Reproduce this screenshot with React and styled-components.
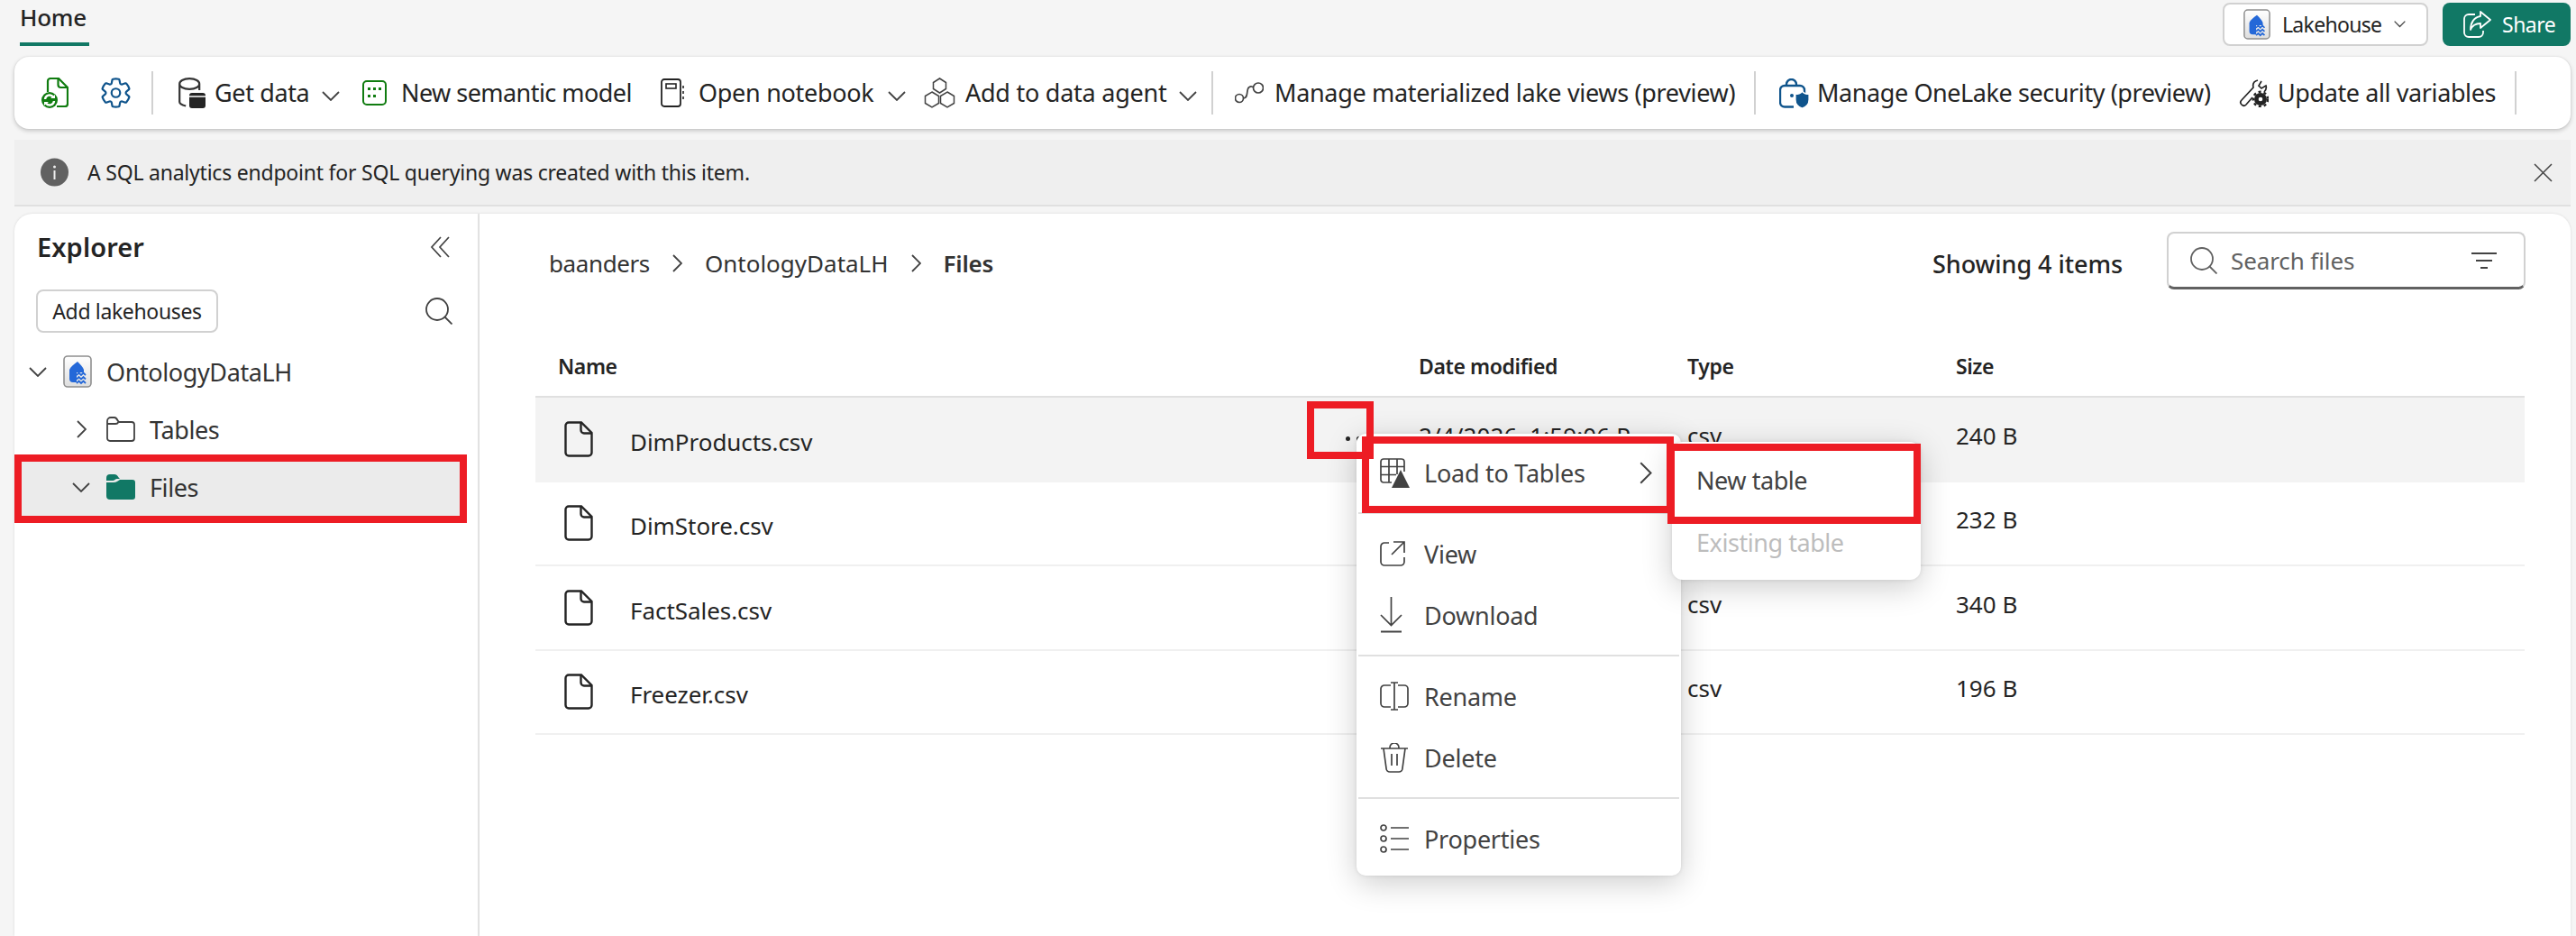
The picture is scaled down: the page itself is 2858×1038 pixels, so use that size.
import React from "react";
import styled, { createGlobalStyle } from "styled-components";

const Global = createGlobalStyle`
  html, body { margin: 0; padding: 0; background: #f5f5f5; }
  * { box-sizing: border-box; }
  body { font-family: "Noto Sans", "Open Sans", sans-serif; color: #242424; }
`;

const Page = styled.div`
  position: relative; width: 2858px; height: 1038px; overflow: hidden;
  background: #f5f5f5; display: flex; flex-direction: column;
`;
const TopBar = styled.header`
  height: 63px; flex: none; display: flex; padding: 3px 6px 0 22px; gap: 16px;
`;
const Tab = styled.div`
  width: 77px; height: 48px; border-bottom: 4px solid #117865; font-size: 26px; font-weight: 500;
  line-height: 32px; letter-spacing: -0.25px; white-space: nowrap; margin-right: auto;
`;
const LakehouseButton = styled.button`
  width: 228px; height: 48px; background: #fff; border: 2px solid #d1d1d1; border-radius: 8px;
  display: flex; align-items: center; padding: 0 0 0 21px; font: inherit; font-size: 23px; color: #242424;
  letter-spacing: -0.7px;
  svg:first-child { margin-right: 13px; }
  svg:last-child { margin-left: 14px; }
`;
const ShareButton = styled.button`
  width: 142px; height: 48px; background: #117865; border: 0; border-radius: 8px; color: #fff;
  display: flex; align-items: center; padding: 0 0 0 23px; gap: 12px; font: inherit; font-size: 23px;
  letter-spacing: -0.5px;
`;
const Toolbar = styled.nav`
  flex: none; margin: 0 6px 0 16px; height: 80px; background: #fff; border-radius: 16px;
  box-shadow: 0 2px 5px rgba(0,0,0,.2), 0 0 2px rgba(0,0,0,.1);
  display: flex; align-items: center; padding-left: 30px; font-size: 27px;
`;
const IconSlot = styled.span`
  display: flex; align-items: center; width: ${p => p.$w}px; flex: none;
`;
const ToolDivider = styled.span`
  width: 2px; height: 48px; background: #d1d1d1; flex: none; margin-right: ${p => p.$mr || 0}px;
`;
const ToolItem = styled.span`
  display: flex; align-items: center; flex: none; width: ${p => p.$w}px; gap: ${p => p.$gap}px;
`;
const ToolText = styled.span`
  white-space: nowrap; letter-spacing: ${p => p.$ls}px; line-height: 36px;
`;
const ChevronWrap = styled.span`
  display: flex; margin-left: ${p => p.$ml}px; padding-top: 6px;
`;
const InfoBar = styled.div`
  flex: none; margin: 12px 6px 0 16px; height: 74px; background: #efefef; border-bottom: 2px solid #e0e0e0;
  display: flex; align-items: center; padding: 0 20px 0 29px; font-size: 23px;
`;
const InfoText = styled.span`
  margin-left: 21px; letter-spacing: -0.22px; margin-right: auto;
`;
const Main = styled.main`
  flex: 1; margin: 8px 6px 0 16px; display: flex; min-height: 0;
`;
const Sidebar = styled.aside`
  width: 516px; flex: none; background: #fff; border-right: 2px solid #e8e8e8; border-radius: 20px 0 0 0;
  box-shadow: 0 0 3px rgba(0,0,0,.12);
`;
const SideHead = styled.div`
  display: flex; justify-content: space-between; align-items: center; padding: 19px 31px 0 25px;
  height: 55px;
`;
const SideTitle = styled.h2`
  margin: 0; font-size: 29px; font-weight: 600; line-height: 36px; letter-spacing: 0.1px;
`;
const SideActions = styled.div`
  display: flex; justify-content: space-between; align-items: center; padding: 29px 28px 0 24px;
`;
const AddButton = styled.button`
  width: 202px; height: 48px; background: #fff; border: 2px solid #d1d1d1; border-radius: 8px;
  font: inherit; font-size: 23px; color: #242424; padding: 0; letter-spacing: -0.35px;
`;
const Tree = styled.div`
  margin-top: 11px; padding-left: 8px; display: flex; flex-direction: column;
`;
const TreeRow = styled.div`
  display: flex; align-items: center; height: ${p => p.$h || 64}px; width: 486px;
  padding-left: ${p => p.$indent}px; margin-top: ${p => p.$mt || 0}px;
  padding-bottom: ${p => p.$active ? 4 : 0}px;
  background: ${p => p.$active ? "#ebebeb" : "transparent"}; font-size: 27px;
`;
const Twist = styled.span`
  width: 20px; height: 20px; display: flex; align-items: center; justify-content: center; margin-right: 18px; flex: none;
`;
const TreeLabel = styled.span`
  margin-left: 16px; letter-spacing: -0.4px; color: #333;
`;
const Content = styled.section`
  flex: 1; background: #fff; border-radius: 0 20px 0 0; min-width: 0; box-shadow: 0 0 3px rgba(0,0,0,.12);
`;
const ContentHead = styled.div`
  display: flex; align-items: center; padding: 20px 50px 0 77px;
`;
const Crumbs = styled.div`
  display: flex; align-items: center; gap: 25px; font-size: 26px; padding-top: 6px; margin-right: auto; color: #333;
`;
const Crumb = styled.span`
  font-weight: ${p => p.$strong ? 600 : 400}; letter-spacing: ${p => p.$ls}px;
`;
const Showing = styled.span`
  font-size: 27px; font-weight: 500; padding-top: 6px; letter-spacing: -0.05px; margin-right: 49px;
`;
const SearchBox = styled.div`
  width: 398px; height: 64px; border: 2px solid #d1d1d1; border-bottom: 3px solid #616161; border-radius: 8px;
  display: flex; align-items: center; padding: 0 30px 0 24px; color: #616161; font-size: 26px;
`;
const SearchText = styled.span`
  margin-left: 15px; margin-right: auto; letter-spacing: -0.1px;
`;
const Table = styled.div`
  margin: 54px 51px 0 62px;
`;
const gridCols = "980px 298px 298px 1fr";
const HeadRow = styled.div`
  display: grid; grid-template-columns: ${gridCols}; height: 66px; align-items: center;
  border-bottom: 2px solid #e0e0e0; font-size: 23px; font-weight: 600;
`;
const HeadCell = styled.div`
  padding-left: ${p => p.$pl || 0}px; letter-spacing: -0.4px; padding-bottom: 2px;
`;
const Row = styled.div`
  display: grid; grid-template-columns: ${gridCols}; height: 93.5px; align-items: center;
  border-bottom: 2px solid ${p => p.$hover ? "#f3f3f3" : "#f0f0f0"};
  background: ${p => p.$hover ? "#f3f3f3" : "transparent"}; font-size: 26px;
`;
const NameCell = styled.div`
  display: flex; align-items: center; padding-left: 32px; padding-right: 52px;
`;
const FileName = styled.span`
  margin-left: 41px; padding-top: 6px; letter-spacing: -0.05px; margin-right: auto;
`;
const Dots = styled.span`
  display: flex; gap: 7px;
  i { display: block; width: 5px; height: 5px; border-radius: 50%; background: #242424; }
`;
const Cell = styled.div`
  padding-bottom: 8px; white-space: nowrap; overflow: hidden; letter-spacing: ${p => p.$ls || 0}px;
  width: ${p => p.$w ? p.$w + "px" : "auto"};
`;
const Menu = styled.div`
  position: absolute; left: 1505px; top: 481px; width: 360px; height: 490px; z-index: 2;
  background: #fff; border-radius: 10px; box-shadow: 0 8px 34px rgba(0,0,0,.2), 0 0 4px rgba(0,0,0,.1);
  color: #424242; font-size: 27px;
`;
const SubMenu = styled.div`
  position: absolute; left: 1855px; top: 490px; width: 276px; height: 153px; z-index: 3; padding-top: 8px;
  background: #fff; border-radius: 12px; box-shadow: 0 8px 34px rgba(0,0,0,.2), 0 0 4px rgba(0,0,0,.1);
  font-size: 27px; color: #424242;
`;
const SubItem = styled.div`
  height: 69px; display: flex; align-items: center; padding-left: 27px; letter-spacing: -0.45px;
  color: ${p => p.$disabled ? "#bdbdbd" : "#424242"};
`;
const MenuGroup = styled.div`
  padding: ${p => p.$pt}px 0 ${p => p.$pb}px;
`;
const MenuItem = styled.div`
  height: ${p => p.$h || 68}px; display: flex; align-items: center; padding: 0 32px 0 26px;
`;
const MenuIcon = styled.span`
  width: 38px; flex: none; display: flex; margin-right: 11px;
`;
const MenuText = styled.span`
  letter-spacing: -0.25px; margin-right: auto;
`;
const MenuLine = styled.div`
  height: 2px; background: #e0e0e0; margin: 0 2px;
`;
const RedBox = styled.div`
  position: absolute; z-index: 4; border: 8px solid #ed1c24; pointer-events: none;
  left: ${p => p.$x}px; top: ${p => p.$y}px; width: ${p => p.$w}px; height: ${p => p.$h}px;
`;

const Chevron = ({ dir = "down", w = 20, color = "#424242", sw = 1.8 }) => {
  if (dir === "down") return <svg width={w} height={w * 0.55} viewBox="0 0 20 11" fill="none" stroke={color} strokeWidth={sw}><path d="M1 1l9 9 9-9" /></svg>;
  return <svg width={w * 0.55} height={w} viewBox="0 0 11 20" fill="none" stroke={color} strokeWidth={sw}><path d="M1 1l9 9-9 9" /></svg>;
};

const LakeIcon = ({ w = 32, h = 36, id = "lk" }) => (
  <svg width={w} height={h} viewBox="0 0 32 36" style={{ flex: "none" }}>
    <defs><linearGradient id={id} x1="0" y1="0" x2="0" y2="1"><stop offset="0" stopColor="#fff" /><stop offset="1" stopColor="#dedede" /></linearGradient></defs>
    <rect x="1" y="1" width="30" height="34" rx="4" fill={`url(#${id})`} stroke="#8f8f8f" strokeWidth="1.6" />
    <path d="M16 7c3 3 6 6 7 9v3h-8v11H11a4 4 0 0 1-4-4V16c1-3 5-6 9-9z" fill="#2468d8" />
    <g fill="none" stroke="#2468d8" strokeWidth="1.8"><path d="M15 22l2.500-2.500 2.500 2.500 2.500-2.500 2.500 2.500" /><path d="M15 26.500l2.500-2.500 2.500 2.500 2.500-2.500 2.500 2.500" /><path d="M15 31l2.500-2.500 2.500 2.500 2.500-2.500 2.500 2.500" /></g>
  </svg>
);
const DocGreen = () => (
  <svg width="30" height="34" viewBox="0 0 30 34" fill="none">
    <path d="M7 16V4a3 3 0 0 1 3-3h9l10 10v18a3 3 0 0 1-3 3h-9" stroke="#107c10" strokeWidth="2.200" />
    <path d="M18.500 1v7a3 3 0 0 0 3 3H29" stroke="#107c10" strokeWidth="2.200" />
    <circle cx="9" cy="25" r="9" fill="#107c10" />
    <path d="M4 24a5 5 0 0 1 9-2.500M14 26a5 5 0 0 1-9 2.500" stroke="#fff" strokeWidth="2.400" />
    <path d="M10 23h5v-4zM8 27H3v4z" fill="#fff" />
  </svg>
);
const Gear = () => (
  <svg width="33" height="34" viewBox="1 1 18 18" fill="none" stroke="#0f548c" strokeWidth="1.200">
    <path d="M1.91 7.38A8.5 8.5 0 0 1 3.7 4.3a.5.5 0 0 1 .54-.13l1.92.68a1 1 0 0 0 1.32-.76l.36-2a.5.5 0 0 1 .4-.4 8.53 8.53 0 0 1 3.55 0c.2.04.35.2.38.4l.37 2a1 1 0 0 0 1.32.76l1.92-.68a.5.5 0 0 1 .54.13 8.5 8.5 0 0 1 1.78 3.08c.06.2 0 .4-.15.54l-1.56 1.32a1 1 0 0 0 0 1.52l1.56 1.32a.5.5 0 0 1 .15.54 8.5 8.5 0 0 1-1.78 3.08.5.5 0 0 1-.54.13l-1.92-.68a1 1 0 0 0-1.32.76l-.37 2a.5.5 0 0 1-.38.4 8.53 8.53 0 0 1-3.56 0 .5.5 0 0 1-.39-.4l-.36-2a1 1 0 0 0-1.32-.76l-1.92.68a.5.5 0 0 1-.54-.13 8.5 8.5 0 0 1-1.78-3.08.5.5 0 0 1 .15-.54l1.56-1.32a1 1 0 0 0 0-1.52L2.06 7.92a.5.5 0 0 1-.15-.54Z" />
    <circle cx="10" cy="10" r="2.6" />
  </svg>
);
const GetData = () => (
  <svg width="30" height="34" viewBox="0 0 30 34" fill="none" style={{ flex: "none" }}>
    <path d="M1.200 7c0-3 4-5.800 11-5.800s11 2.800 11 5.800v7M1.200 7v20c0 2 3 3.500 7 4.500M1.200 7c0 3 4 5.800 11 5.800s11-2.800 11-5.800" stroke="#333" strokeWidth="2.200" />
    <rect x="12" y="17" width="18" height="17" rx="3" fill="#242424" />
    <path d="M12 21h18" stroke="#fff" strokeWidth="1.500" />
  </svg>
);
const Semantic = () => (
  <svg width="27" height="28" viewBox="0 0 27 28" fill="none" style={{ flex: "none" }}>
    <rect x="1" y="1" width="25" height="26" rx="4" stroke="#107c10" strokeWidth="2" />
    <g fill="#107c10"><rect x="6" y="8" width="3" height="3" /><rect x="12" y="8" width="3" height="3" /><rect x="18" y="8" width="3" height="3" /><rect x="6" y="16" width="3" height="3" /><rect x="12" y="16" width="3" height="3" /></g>
  </svg>
);
const Notebook = () => (
  <svg width="26" height="32" viewBox="0 0 26 32" fill="none" style={{ flex: "none" }}>
    <rect x="1" y="1" width="21" height="30" rx="3" stroke="#242424" strokeWidth="1.8" />
    <rect x="6" y="6" width="11" height="5" stroke="#242424" strokeWidth="1.6" />
    <path d="M25 8v3M25 14v3M25 20v3" stroke="#242424" strokeWidth="1.6" />
  </svg>
);
const Agent = () => (
  <svg width="35" height="34" viewBox="0 0 35 34" fill="none" stroke="#424242" strokeWidth="1.5" style={{ flex: "none" }}>
    <path d="M17.500 1l7 4.500v7l-7 4.500-7-4.500v-7z" />
    <path d="M9 16l7.500 4.500v8L9 33l-7.500-4.500v-8z" />
    <path d="M26 16l7.500 4.500v8L26 33l-7.500-4.500v-8z" />
  </svg>
);
const LakeViews = () => (
  <svg width="32" height="24" viewBox="0 0 32 24" fill="none" stroke="#424242" strokeWidth="1.700" style={{ flex: "none" }}>
    <circle cx="5" cy="18" r="4.500" />
    <circle cx="26" cy="6.500" r="5.500" />
    <path d="M9.500 18c6 0 3-10 6-12s2-1 5-.5" />
  </svg>
);
const Security = () => (
  <svg width="33" height="33" viewBox="0 0 33 33" fill="none" style={{ flex: "none" }}>
    <path d="M8 9V6.500a5.500 5.500 0 0 1 11 0V9" stroke="#0f548c" strokeWidth="2.400" />
    <path d="M16 31.500H6a5 5 0 0 1-5-5V13a5 5 0 0 1 5-5h17a5 5 0 0 1 5 5v3" stroke="#0f548c" strokeWidth="2.400" />
    <circle cx="14" cy="19" r="2" fill="#0f548c" />
    <path d="M25.500 14.500c2 2 4 3 7.500 3v6c0 5-3 8-7.500 9.500-4.500-1.500-7.500-4.500-7.500-9.500v-6c3.500 0 5.500-1 7.500-3z" fill="#0f548c" stroke="#fff" strokeWidth="1.200" />
  </svg>
);
const Update = () => (
  <svg width="33" height="32" viewBox="0 0 33 32" fill="none" style={{ flex: "none" }}>
    <path d="M21 2c-4 1-6 4-5 8L3 24c-2 2-1 4 0 5s3 2 5 0l7-8M25 3l-3 5 3 3 5-3c1 3 0 5-2 7" stroke="#242424" strokeWidth="1.700" />
    <circle cx="24" cy="23" r="7" fill="#242424" />
    <circle cx="24" cy="23" r="8.200" stroke="#242424" strokeWidth="2.400" strokeDasharray="3 3" />
    <circle cx="24" cy="23" r="2.300" fill="#fff" />
  </svg>
);
const ShareIcon = () => (
  <svg width="31" height="30" viewBox="0 0 31 30" fill="none" stroke="#fff" strokeWidth="1.800" style={{ flex: "none" }}>
    <path d="M13 4H6a5 5 0 0 0-5 5v15a5 5 0 0 0 5 5h11a5 5 0 0 0 5-5v-2" />
    <path d="M19 1l11 9-11 9v-5c-5 0-9 2-11 7 0-8 4-14 11-15z" strokeLinejoin="round" />
  </svg>
);
const InfoIcon = () => (
  <svg width="31" height="32" viewBox="0 0 31 32" style={{ flex: "none" }}>
    <circle cx="15.500" cy="16" r="15.500" fill="#616161" />
    <rect x="14.500" y="14" width="2" height="10" fill="#eee" />
    <circle cx="15.500" cy="10" r="1.500" fill="#eee" />
  </svg>
);
const CloseX = () => (
  <svg width="21" height="21" viewBox="0 0 21 21" fill="none" stroke="#424242" strokeWidth="1.500"><path d="M1 1l19 19M20 1L1 20" /></svg>
);
const Collapse = () => (
  <svg width="22" height="24" viewBox="0 0 22 24" fill="none" stroke="#424242" strokeWidth="1.700"><path d="M12 1L2 12l10 11M21 1L11 12l10 11" /></svg>
);
const SearchIcon = ({ color = "#424242" }) => (
  <svg width="30" height="30" viewBox="0 0 30 30" fill="none" stroke={color} strokeWidth="1.800" style={{ flex: "none" }}>
    <circle cx="13" cy="13" r="12" /><path d="M21.500 21.500l8 8" />
  </svg>
);
const FolderOutline = () => (
  <svg width="32" height="28" viewBox="0 0 32 28" fill="none" stroke="#424242" strokeWidth="1.800" style={{ flex: "none" }}>
    <path d="M1 5a4 4 0 0 1 4-4h4c2 0 3 2 4 4l1 1h14a3 3 0 0 1 3 3v15a3 3 0 0 1-3 3H4a3 3 0 0 1-3-3z" />
    <path d="M1 8h9c2 0 3-1 3-2" />
  </svg>
);
const FolderFilled = () => (
  <svg width="32" height="28" viewBox="0 0 32 28" style={{ flex: "none" }}>
    <path d="M0 4a4 4 0 0 1 4-4h5c3 0 4 3 6 5h-3c-2 0-3 2-5 2H0z" fill="#117865" />
    <path d="M0 9h8c3 0 5-2 7-3h14a3 3 0 0 1 3 3v16a3 3 0 0 1-3 3H4a4 4 0 0 1-4-4z" fill="#117865" />
  </svg>
);
const FileIcon = () => (
  <svg width="32" height="40" viewBox="0 0 32 40" fill="none" stroke="#242424" strokeWidth="2.400" style={{ flex: "none" }}>
    <path d="M19 1.500H5a3.500 3.500 0 0 0-3.500 3.500v30A3.500 3.500 0 0 0 5 38.500h22a3.500 3.500 0 0 0 3.500-3.500V13z" />
    <path d="M18.500 1.500V10a3.500 3.500 0 0 0 3.500 3.500h8.500" />
  </svg>
);
const LoadIcon = () => (
  <svg width="33" height="33" viewBox="0 0 33 33" fill="none" stroke="#424242" strokeWidth="1.700">
    <path d="M13 27H4a3 3 0 0 1-3-3V4a3 3 0 0 1 3-3h20a3 3 0 0 1 3 3v11" />
    <path d="M1 9.500h26M1 18.500h17M10 1v26M19 1v17" />
    <path d="M23 13l10 20H13z" fill="#424242" stroke="none" />
  </svg>
);
const ViewIcon = () => (
  <svg width="28" height="28" viewBox="0 0 28 28" fill="none" stroke="#424242" strokeWidth="1.700">
    <path d="M10 2H5a4 4 0 0 0-4 4v17a4 4 0 0 0 4 4h18a4 4 0 0 0 4-4V18" />
    <path d="M15 1h12v12M27 1L13 15" />
  </svg>
);
const DownloadIcon = () => (
  <svg width="25" height="40" viewBox="0 0 25 40" fill="none" stroke="#424242" strokeWidth="1.700">
    <path d="M12.500 0v31M1 20l11.500 11.500L24 20" /><path d="M1 38.500h23" strokeWidth="2" />
  </svg>
);
const RenameIcon = () => (
  <svg width="32" height="32" viewBox="0 0 32 32" fill="none" stroke="#424242" strokeWidth="1.700">
    <path d="M12 4H5a4 4 0 0 0-4 4v16a4 4 0 0 0 4 4h7M20 4h7a4 4 0 0 1 4 4v16a4 4 0 0 1-4 4h-7" />
    <path d="M16 1v30M12 1h8M12 31h8" />
  </svg>
);
const TrashIcon = () => (
  <svg width="32" height="33" viewBox="0 0 32 33" fill="none" stroke="#424242" strokeWidth="1.700">
    <path d="M1 6h30M11 6V5a5 5 0 0 1 10 0v1M4 6l3 22a4 4 0 0 0 4 4h10a4 4 0 0 0 4-4l3-22M13 12v13M19 12v13" />
  </svg>
);
const PropsIcon = () => (
  <svg width="32" height="32" viewBox="0 0 32 32" fill="none" stroke="#424242" strokeWidth="1.700">
    <rect x="1" y="1" width="6" height="6" rx="3" /><rect x="1" y="13" width="6" height="6" rx="3" /><rect x="1" y="25" width="6" height="6" rx="3" />
    <path d="M12 4h20M12 16h20M12 28h20" />
  </svg>
);
const FilterIcon = () => (
  <svg width="28" height="18" viewBox="0 0 28 18" fill="none" stroke="#424242" strokeWidth="1.800" style={{ flex: "none" }}>
    <path d="M0 1h28M5 9h18M10 17h8" />
  </svg>
);

const files = [
  { name: "DimProducts.csv", date: "2/4/2026, 1:59:06 PM", size: "240 B", hover: true },
  { name: "DimStore.csv", date: "2/4/2026, 1:59:06 PM", size: "232 B" },
  { name: "FactSales.csv", date: "2/4/2026, 1:59:06 PM", size: "340 B" },
  { name: "Freezer.csv", date: "2/4/2026, 1:59:06 PM", size: "196 B" },
];

export default function App() {
  return (
    <Page>
      <Global />
      <TopBar>
        <Tab>Home</Tab>
        <LakehouseButton>
          <LakeIcon w={30} h={36} id="lk1" />
          Lakehouse
          <Chevron w={13} sw={2} />
        </LakehouseButton>
        <ShareButton><ShareIcon />Share</ShareButton>
      </TopBar>

      <Toolbar>
        <IconSlot $w={66}><DocGreen /></IconSlot>
        <IconSlot $w={56}><Gear /></IconSlot>
        <ToolDivider $mr={28} />
        <ToolItem $w={204} $gap={10}><GetData /><ToolText $ls={-0.37}>Get data</ToolText><ChevronWrap $ml={4}><Chevron /></ChevronWrap></ToolItem>
        <ToolItem $w={331} $gap={16}><Semantic /><ToolText $ls={-0.55}>New semantic model</ToolText></ToolItem>
        <ToolItem $w={292} $gap={16}><Notebook /><ToolText $ls={-0.3}>Open notebook</ToolText><ChevronWrap $ml={0}><Chevron /></ChevronWrap></ToolItem>
        <ToolItem $w={319} $gap={11}><Agent /><ToolText $ls={-0.25}>Add to data agent</ToolText><ChevronWrap $ml={3}><Chevron /></ChevronWrap></ToolItem>
        <ToolDivider $mr={24} />
        <ToolItem $w={576} $gap={12}><LakeViews /><ToolText $ls={-0.33}>Manage materialized lake views (preview)</ToolText></ToolItem>
        <ToolDivider $mr={26} />
        <ToolItem $w={510} $gap={9}><Security /><ToolText $ls={-0.42}>Manage OneLake security (preview)</ToolText></ToolItem>
        <ToolItem $w={306} $gap={10}><Update /><ToolText $ls={-0.4}>Update all variables</ToolText></ToolItem>
        <ToolDivider />
      </Toolbar>

      <InfoBar>
        <InfoIcon />
        <InfoText>A SQL analytics endpoint for SQL querying was created with this item.</InfoText>
        <CloseX />
      </InfoBar>

      <Main>
        <Sidebar>
          <SideHead><SideTitle>Explorer</SideTitle><Collapse /></SideHead>
          <SideActions>
            <AddButton>Add lakehouses</AddButton>
            <SearchIcon />
          </SideActions>
          <Tree>
            <TreeRow $indent={8}>
              <Twist><Chevron /></Twist>
              <LakeIcon id="lk2" />
              <TreeLabel>OntologyDataLH</TreeLabel>
            </TreeRow>
            <TreeRow $indent={56}>
              <Twist><Chevron dir="right" /></Twist>
              <FolderOutline />
              <TreeLabel>Tables</TreeLabel>
            </TreeRow>
            <TreeRow $indent={56} $h={60} $mt={4} $active>
              <Twist><Chevron /></Twist>
              <FolderFilled />
              <TreeLabel>Files</TreeLabel>
            </TreeRow>
          </Tree>
        </Sidebar>

        <Content>
          <ContentHead>
            <Crumbs>
              <Crumb $ls={-0.4}>baanders</Crumb>
              <Chevron dir="right" w={20} />
              <Crumb $ls={0}>OntologyDataLH</Crumb>
              <Chevron dir="right" w={20} />
              <Crumb $strong $ls={-0.2}>Files</Crumb>
            </Crumbs>
            <Showing>Showing 4 items</Showing>
            <SearchBox>
              <SearchIcon color="#616161" />
              <SearchText>Search files</SearchText>
              <FilterIcon />
            </SearchBox>
          </ContentHead>
          <Table>
            <HeadRow>
              <HeadCell $pl={25}>Name</HeadCell>
              <HeadCell>Date modified</HeadCell>
              <HeadCell>Type</HeadCell>
              <HeadCell>Size</HeadCell>
            </HeadRow>
            {files.map(f => (
              <Row key={f.name} $hover={f.hover}>
                <NameCell>
                  <FileIcon />
                  <FileName>{f.name}</FileName>
                  {f.hover && <Dots><i /><i /><i /></Dots>}
                </NameCell>
                <Cell $w={235} $ls={0.1}>{f.date}</Cell>
                <Cell>csv</Cell>
                <Cell>{f.size}</Cell>
              </Row>
            ))}
          </Table>
        </Content>
      </Main>

      <Menu>
        <MenuGroup $pt={0} $pb={1}>
          <MenuItem $h={86}><MenuIcon><LoadIcon /></MenuIcon><MenuText>Load to Tables</MenuText><Chevron dir="right" w={25} sw={1.6} /></MenuItem>
        </MenuGroup>
        <MenuLine />
        <MenuGroup $pt={10} $pb={10}>
          <MenuItem><MenuIcon><ViewIcon /></MenuIcon><MenuText>View</MenuText></MenuItem>
          <MenuItem><MenuIcon><DownloadIcon /></MenuIcon><MenuText>Download</MenuText></MenuItem>
        </MenuGroup>
        <MenuLine />
        <MenuGroup $pt={10} $pb={10}>
          <MenuItem><MenuIcon><RenameIcon /></MenuIcon><MenuText>Rename</MenuText></MenuItem>
          <MenuItem><MenuIcon><TrashIcon /></MenuIcon><MenuText>Delete</MenuText></MenuItem>
        </MenuGroup>
        <MenuLine />
        <MenuGroup $pt={10} $pb={0}>
          <MenuItem><MenuIcon><PropsIcon /></MenuIcon><MenuText>Properties</MenuText></MenuItem>
        </MenuGroup>
      </Menu>
      <SubMenu>
        <SubItem>New table</SubItem>
        <SubItem $disabled>Existing table</SubItem>
      </SubMenu>

      <RedBox $x={16} $y={504} $w={502} $h={76} />
      <RedBox $x={1450} $y={445} $w={74} $h={64} />
      <RedBox $x={1511} $y={484} $w={346} $h={85} />
      <RedBox $x={1850} $y={492} $w={281} $h={89} />
    </Page>
  );
}
